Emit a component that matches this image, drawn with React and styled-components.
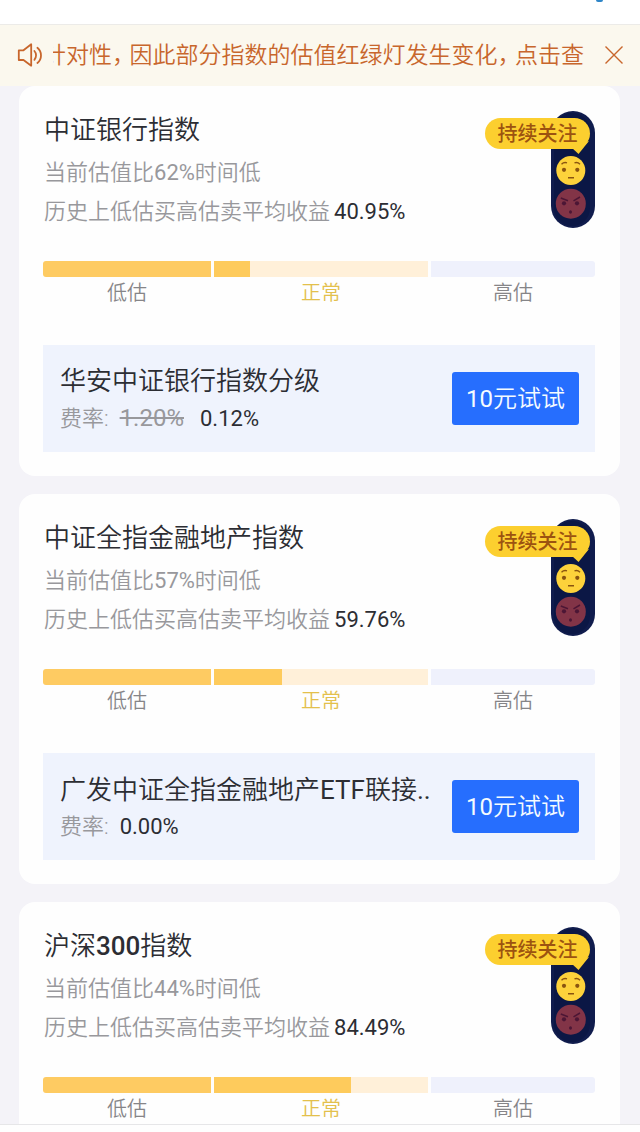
import React from "react";
import styled, { createGlobalStyle } from "styled-components";

const GlobalStyle = createGlobalStyle`
  *, *::before, *::after { box-sizing: border-box; }
  body {
    margin: 0;
    background: #f4f3f8;
    font-family: Roboto, "Noto Sans CJK SC", sans-serif;
    font-weight: 350;
    color: #2c2d33;
  }
  h2, h3, p { margin: 0; font-weight: inherit; }
`;

const Page = styled.div`
  display: flex;
  flex-direction: column;
  height: 100vh;
  overflow: hidden;
`;

const TopBar = styled.header`
  flex: none;
  display: flex;
  justify-content: flex-end;
  height: 25px;
  padding-right: 37px;
  background: #fff;
  border-bottom: 1px solid #ecebe8;
`;

const TopMark = styled.span`
  width: 7px;
  height: 2px;
  border-radius: 0 0 2px 2px;
  background: #2f86c8;
`;

const Notice = styled.div`
  flex: none;
  display: flex;
  align-items: center;
  height: 61px;
  padding: 0 16px 0 17px;
  background: #fbf8ee;
  color: #c8662c;
`;

const NoticeText = styled.p`
  flex: 1;
  min-width: 0;
  display: flex;
  justify-content: flex-end;
  overflow: hidden;
  margin: 0 20px 0 10px;
  font-size: 23px;
  line-height: 34px;
  white-space: nowrap;
`;

const Comma = styled.span`
  margin-right: 6px;
  font-feature-settings: "halt";
`;

const CloseButton = styled.button`
  flex: none;
  display: flex;
  padding: 0;
  border: 0;
  background: none;
  color: inherit;
  cursor: pointer;
`;

const List = styled.main`
  flex: 1;
  min-height: 0;
  display: flex;
  flex-direction: column;
  gap: 18px;
  padding: 0 20px 0 19px;
  overflow-y: auto;
  scrollbar-width: none;
`;

const Card = styled.article`
  flex: none;
  padding: 24px 25px 24px 24px;
  border-radius: 16px;
  background: #fefefe;
`;

const CardHead = styled.div`
  display: flex;
  justify-content: space-between;
  align-items: flex-start;
  padding-left: 1px;
`;

const Latin = styled.span`
  font-weight: ${(p) => p.$weight || 400};
`;

const Title = styled.h2`
  margin-bottom: 3px;
  font-size: 26px;
  line-height: 40px;
`;

const Stat = styled.p`
  font-size: 22px;
  line-height: 39px;
  color: #98989c;
`;

const Value = styled.span`
  margin-left: 4px;
  font-weight: 400;
  color: #2c2d33;
`;

const Signal = styled.div`
  position: relative;
  flex: none;
  width: 44px;
  height: 117px;
  margin-top: 1px;
`;

const Bubble = styled.span`
  position: absolute;
  top: 7px;
  right: 5px;
  width: 105px;
  height: 31px;
  border-radius: 16px;
  background: #fccf2f;
  color: #9c5310;
  font-size: 20px;
  line-height: 33px;
  font-weight: 500;
  text-align: center;
  white-space: nowrap;
`;

const Gauge = styled.div`
  display: grid;
  grid-template-columns: 168fr 214fr 164fr;
  column-gap: 3px;
  margin-top: 30px;
`;

const trackColors = { low: "#fecb62", normal: "#fff0d9", high: "#eff1fc" };

const Track = styled.div`
  height: 16px;
  overflow: hidden;
  border-radius: ${(p) => (p.$level === "low" ? "3px 0 0 3px" : p.$level === "high" ? "0 3px 3px 0" : "0")};
  background: ${(p) => trackColors[p.$level]};
`;

const Fill = styled.div`
  height: 100%;
  background: #fecb5c;
`;

const Level = styled.span`
  font-size: 20px;
  line-height: 32px;
  text-align: center;
  color: ${(p) => (p.$active ? "#e3c04c" : "#868588")};
`;

const Fund = styled.section`
  display: flex;
  align-items: center;
  justify-content: space-between;
  gap: 12px;
  height: 107px;
  margin-top: 36px;
  padding: 0 16px 0 17px;
  background: #eff3fd;
`;

const FundInfo = styled.div`
  min-width: 0;
  padding-top: 2px;
  white-space: nowrap;
`;

const FundName = styled.h3`
  font-size: 26px;
  line-height: 38px;
`;

const Fee = styled.p`
  font-size: 22px;
  line-height: 36px;
  color: #98989c;
`;

const OldFee = styled.del`
  margin-left: 11px;
  font-size: 24px;
  font-weight: 400;
`;

const NewFee = styled.span`
  margin-left: ${(p) => (p.$discounted ? "16px" : "11px")};
  font-weight: 400;
  color: #2c2d33;
`;

const BuyButton = styled.button`
  flex: none;
  width: 127px;
  height: 53px;
  padding: 0 0 4px;
  border: 0;
  border-radius: 3px;
  background: #266efe;
  color: #f4fbff;
  font: inherit;
  font-size: 24px;
  cursor: pointer;
`;

const BottomBar = styled.footer`
  flex: none;
  height: 8px;
  background: #fefefe;
  border-top: 1px solid #e6e6e8;
`;

function MixedText({ children, weight }) {
  return children
    .split(/([A-Za-z0-9.%]+)/)
    .map((part, i) => (i % 2 ? <Latin key={i} $weight={weight}>{part}</Latin> : part));
}

function SpeakerIcon() {
  return (
    <svg width="26" height="26" viewBox="0 0 26 26" fill="none" stroke="currentColor" strokeWidth="1.8" strokeLinejoin="round" aria-hidden="true">
      <path d="M1.8 7.3H6.5L14.2 1.3V22.7L6.5 17H1.8Z" />
      <path d="M17.4 8C19.6 10.3 19.6 14.3 17.4 16.8M20.4 4.8C25.2 8.8 25.2 16 20.4 20" strokeLinecap="round" />
    </svg>
  );
}

function CloseIcon() {
  return (
    <svg width="20" height="20" viewBox="0 0 20 20" fill="none" stroke="currentColor" strokeWidth="1.4" aria-hidden="true">
      <path d="M1.5 .5L18.5 17.5M18.5 .5L1.5 17.5" />
    </svg>
  );
}

function TrafficLight() {
  return (
    <Signal>
      <svg width="44" height="117" viewBox="0 0 44 117" aria-hidden="true">
        <rect width="44" height="117" rx="22" fill="#101c4d" />
        <rect x="3" y="2" width="36" height="113" rx="18" fill="#0b1745" />
        <circle cx="19.8" cy="59.5" r="14.5" fill="#fdd23b" />
        <g fill="#8a5410">
          <circle cx="13" cy="58.8" r="2.1" />
          <circle cx="26.3" cy="58.8" r="2.1" />
        </g>
        <path d="M10.5 53.2Q13 50.8 16 51.9M23.5 51.9Q26.5 50.8 29 53.2M17 66.8H23" fill="none" stroke="#8a5410" strokeWidth="1.4" />
        <circle cx="19.8" cy="92.7" r="15" fill="#823447" />
        <g fill="#4c1635">
          <circle cx="13" cy="92.3" r="2.1" />
          <circle cx="26" cy="92.3" r="2.1" />
          <ellipse cx="19.5" cy="101" rx="1.5" ry="1.8" />
        </g>
        <path d="M9.8 87L17 89.8M22.5 89.8L29 86" fill="none" stroke="#4c1635" strokeWidth="1.5" />
        <path d="M20 36L27.5 43L38 30Z" fill="#fccf2f" />
      </svg>
      <Bubble>持续关注</Bubble>
    </Signal>
  );
}

function IndexCard({ name, percentile, profit, fill, fund }) {
  return (
    <Card>
      <CardHead>
        <div>
          <Title>
            <MixedText weight={500}>{name}</MixedText>
          </Title>
          <Stat>
            当前估值比<Latin>{percentile}</Latin>时间低
          </Stat>
          <Stat>
            历史上低估买高估卖平均收益<Value>{profit}</Value>
          </Stat>
        </div>
        <TrafficLight />
      </CardHead>
      <Gauge>
        <Track $level="low" />
        <Track $level="normal">
          <Fill style={{ width: `${fill}%` }} />
        </Track>
        <Track $level="high" />
        <Level>低估</Level>
        <Level $active>正常</Level>
        <Level>高估</Level>
      </Gauge>
      {fund && (
        <Fund>
          <FundInfo>
            <FundName>
              <MixedText>{fund.name}</MixedText>
            </FundName>
            <Fee>
              费率:
              {fund.oldFee && <OldFee>{fund.oldFee}</OldFee>}
              <NewFee $discounted={Boolean(fund.oldFee)}>{fund.fee}</NewFee>
            </Fee>
          </FundInfo>
          <BuyButton type="button">
            <MixedText>10元试试</MixedText>
          </BuyButton>
        </Fund>
      )}
    </Card>
  );
}

const indexes = [
  {
    name: "中证银行指数",
    percentile: "62%",
    profit: "40.95%",
    fill: 17,
    fund: { name: "华安中证银行指数分级", oldFee: "1.20%", fee: "0.12%" },
  },
  {
    name: "中证全指金融地产指数",
    percentile: "57%",
    profit: "59.76%",
    fill: 32,
    fund: { name: "广发中证全指金融地产ETF联接..", fee: "0.00%" },
  },
  { name: "沪深300指数", percentile: "44%", profit: "84.49%", fill: 64 },
];

export default function App() {
  return (
    <Page>
      <GlobalStyle />
      <TopBar>
        <TopMark />
      </TopBar>
      <Notice>
        <SpeakerIcon />
        <NoticeText>
          <span>
            针对性<Comma>，</Comma>因此部分指数的估值红绿灯发生变化<Comma>，</Comma>点击查
          </span>
        </NoticeText>
        <CloseButton type="button" aria-label="关闭">
          <CloseIcon />
        </CloseButton>
      </Notice>
      <List>
        {indexes.map((item) => (
          <IndexCard key={item.name} {...item} />
        ))}
      </List>
      <BottomBar />
    </Page>
  );
}
